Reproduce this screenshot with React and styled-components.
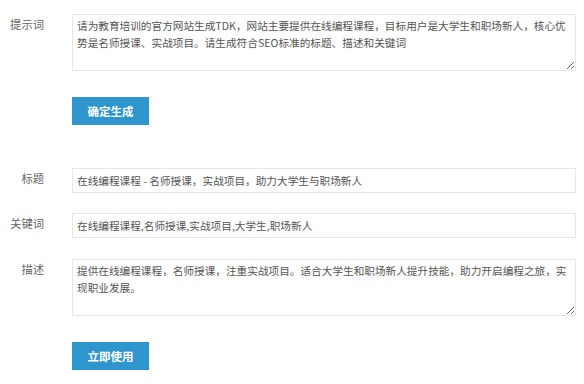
import React from 'react';
import styled, { createGlobalStyle } from 'styled-components';

const GlobalStyle = createGlobalStyle`
  html, body {
    margin: 0;
    padding: 0;
    background: #ffffff;
  }
  body {
    font-family: "Noto Sans CJK SC", "Noto Sans", sans-serif;
  }
`;

const Page = styled.div`
  padding: 14px 8px 0 8px;
  display: flex;
  flex-direction: column;
`;

const Row = styled.div`
  display: flex;
  align-items: flex-start;
  margin-top: ${props => props.gap || 0}px;
`;

const Label = styled.label`
  width: 36px;
  flex: none;
  margin-right: 28px;
  padding-top: 2px;
  text-align: right;
  font-size: 11.3px;
  line-height: 17px;
  color: #666666;
  white-space: nowrap;
`;

const fieldBase = `
  box-sizing: border-box;
  width: 100%;
  margin: 0;
  border: 1px solid #e6e6e6;
  border-radius: 0;
  background: #ffffff;
  color: #555555;
  font-family: "Noto Sans CJK SC", "Noto Sans", sans-serif;
  font-size: 10.65px;
  outline: none;
`;

const Field = styled.div`
  flex: 1;
  min-width: 0;
`;

const TextArea = styled.textarea`
  ${fieldBase}
  display: block;
  height: 57px;
  padding: 2px 4px;
  line-height: 17px;
  resize: vertical;
  overflow: hidden;
`;

const TextInput = styled.input`
  ${fieldBase}
  display: block;
  height: 25px;
  padding: 0 4px;
  line-height: 23px;
`;

const Button = styled.button`
  width: 77px;
  height: 28px;
  margin-left: 64px;
  border: none;
  border-radius: 0;
  background: #2f96cd;
  color: #ffffff;
  font-family: "Noto Sans CJK SC", "Noto Sans", sans-serif;
  font-size: 11.5px;
  font-weight: 700;
  cursor: pointer;
  padding: 0;
`;

const prompt =
  '请为教育培训的官方网站生成TDK，网站主要提供在线编程课程，目标用户是大学生和职场新人，核心优势是名师授课、实战项目。请生成符合SEO标准的标题、描述和关键词';

const result = {
  title: '在线编程课程 - 名师授课，实战项目，助力大学生与职场新人',
  keywords: '在线编程课程,名师授课,实战项目,大学生,职场新人',
  description:
    '提供在线编程课程，名师授课，注重实战项目。适合大学生和职场新人提升技能，助力开启编程之旅，实现职业发展。',
};

const App = () => {
  return (
    <>
      <GlobalStyle />
      <Page>
        <Row>
          <Label>提示词</Label>
          <Field>
            <TextArea defaultValue={prompt} />
          </Field>
        </Row>
        <Row gap={26}>
          <Button type="button">确定生成</Button>
        </Row>

        <Row gap={43}>
          <Label>标题</Label>
          <Field>
            <TextInput type="text" defaultValue={result.title} />
          </Field>
        </Row>
        <Row gap={20}>
          <Label>关键词</Label>
          <Field>
            <TextInput type="text" defaultValue={result.keywords} />
          </Field>
        </Row>
        <Row gap={21}>
          <Label>描述</Label>
          <Field>
            <TextArea defaultValue={result.description} />
          </Field>
        </Row>
        <Row gap={26}>
          <Button type="button">立即使用</Button>
        </Row>
      </Page>
    </>
  );
};

export default App;
